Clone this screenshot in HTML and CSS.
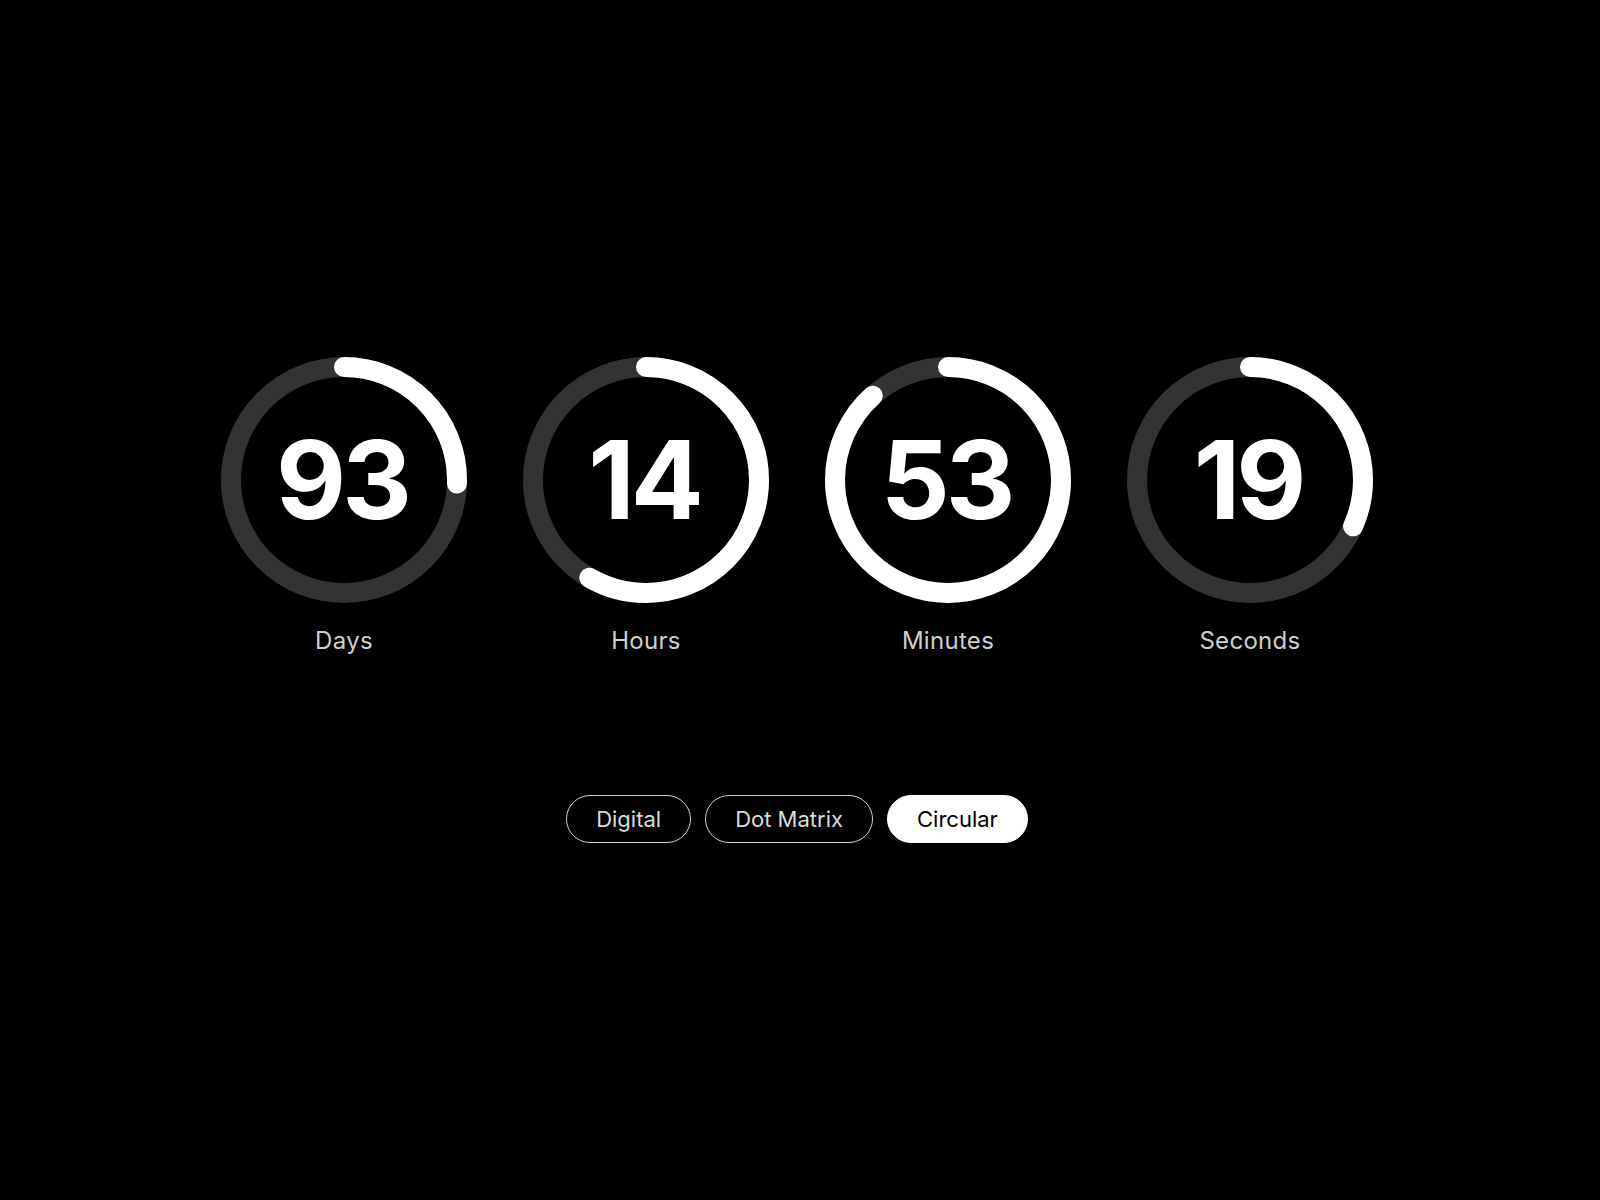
FILE: index.html
```html
<!DOCTYPE html>
<html lang="en">
<head>
<meta charset="utf-8">
<title>Countdown</title>
<link rel="stylesheet" href="styles.css">
</head>
<body>
<main class="page">
  <section class="units">
    <div class="unit">
      <div class="dial">
        <svg class="ring" viewBox="0 0 250 250" width="250" height="250">
          <circle class="track" cx="125" cy="125" r="113"/>
          <circle class="progress" cx="125" cy="125" r="113" style="stroke-dasharray: 181 1000"/>
        </svg>
        <span class="value">93</span>
      </div>
      <span class="label">Days</span>
    </div>
    <div class="unit">
      <div class="dial">
        <svg class="ring" viewBox="0 0 250 250" width="250" height="250">
          <circle class="track" cx="125" cy="125" r="113"/>
          <circle class="progress" cx="125" cy="125" r="113" style="stroke-dasharray: 414 1000"/>
        </svg>
        <span class="value">14</span>
      </div>
      <span class="label">Hours</span>
    </div>
    <div class="unit">
      <div class="dial">
        <svg class="ring" viewBox="0 0 250 250" width="250" height="250">
          <circle class="track" cx="125" cy="125" r="113"/>
          <circle class="progress" cx="125" cy="125" r="113" style="stroke-dasharray: 627 1000"/>
        </svg>
        <span class="value">53</span>
      </div>
      <span class="label">Minutes</span>
    </div>
    <div class="unit">
      <div class="dial">
        <svg class="ring" viewBox="0 0 250 250" width="250" height="250">
          <circle class="track" cx="125" cy="125" r="113"/>
          <circle class="progress" cx="125" cy="125" r="113" style="stroke-dasharray: 225 1000"/>
        </svg>
        <span class="value">19</span>
      </div>
      <span class="label">Seconds</span>
    </div>
  </section>
  <nav class="modes">
    <button class="mode">Digital</button>
    <button class="mode">Dot Matrix</button>
    <button class="mode active">Circular</button>
  </nav>
</main>
</body>
</html>
```
FILE: styles.css
```css
html, body {
  margin: 0;
  padding: 0;
  background: #000;
}
body {
  width: 1600px;
  height: 1200px;
  overflow: hidden;
  font-family: Inter, "Noto Sans", "Liberation Sans", sans-serif;
  color: #fff;
}
.page {
  display: flex;
  flex-direction: column;
  align-items: center;
  padding-top: 355px;
  padding-right: 6px;
}
.units {
  display: flex;
  gap: 52px;
}
.unit {
  display: flex;
  flex-direction: column;
  align-items: center;
}
.dial {
  display: grid;
  width: 250px;
  height: 250px;
}
.ring, .value {
  grid-area: 1 / 1;
}
.ring {
  transform: rotate(-90deg);
}
.track {
  fill: none;
  stroke: #333333;
  stroke-width: 20;
}
.progress {
  fill: none;
  stroke: #fff;
  stroke-width: 20;
  stroke-linecap: round;
}
.value {
  align-self: center;
  justify-self: center;
  font-size: 108px;
  font-weight: 700;
  letter-spacing: -4px;
  line-height: 1;
  color: #fff;
  padding-right: 4px;
}
.label {
  margin-top: 22px;
  font-size: 24px;
  line-height: 28px;
  letter-spacing: 0.3px;
  color: #cfcfcf;
}
.modes {
  display: flex;
  gap: 14px;
  margin-top: 140px;
}
.mode {
  height: 48px;
  padding: 0 29px;
  border: 1.5px solid #cfcfcf;
  border-radius: 24px;
  background: transparent;
  color: #dcdcdc;
  font-family: Inter, "Noto Sans", "Liberation Sans", sans-serif;
  font-size: 22px;
}
.mode.active {
  background: #fff;
  border-color: #fff;
  color: #000;
}
```
